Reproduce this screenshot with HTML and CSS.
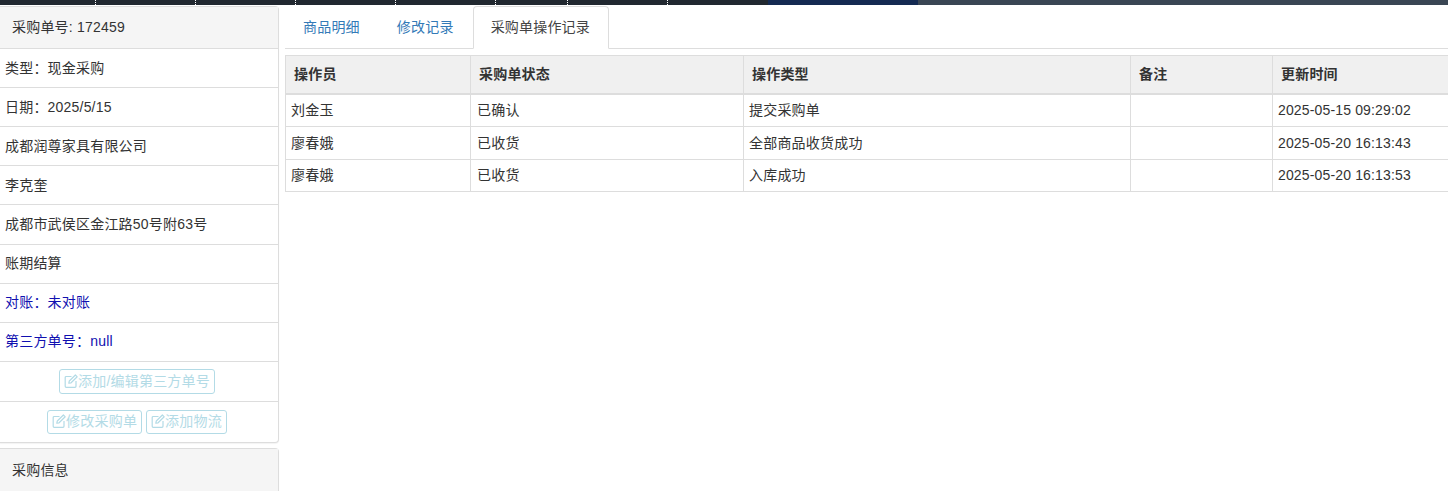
FILE: index.html
```html
<!DOCTYPE html>
<html lang="zh-CN">
<head>
<meta charset="utf-8">
<title>采购单操作记录</title>
<link rel="stylesheet" href="styles.css">
</head>
<body>
<svg width="0" height="0" class="defs">
  <symbol id="edit" viewBox="0 0 14 14">
    <path d="M7.5 2.5H2.2a1 1 0 0 0-1 1v8.8a1 1 0 0 0 1 1H11a1 1 0 0 0 1-1V7" fill="none" stroke="currentColor" stroke-width="1.2"/>
    <path d="M4.8 9.2 5.3 7 11.4 1 13.2 2.8 7.1 8.8Z" fill="none" stroke="currentColor" stroke-width="1.2" stroke-linejoin="round"/>
  </symbol>
</svg>
<div class="topbar">
  <i class="seg w95"></i><i class="seg w100"></i><i class="seg w100"></i><i class="seg w100"></i><i class="seg w100"></i><i class="seg w73"></i><i class="seg w100"></i><i class="seg w100 last"></i>
  <i class="navy"></i><i class="slate"></i>
</div>
<div class="page">
  <aside class="side">
    <section class="panel">
      <h3 class="panel-head">采购单号: 172459</h3>
      <div class="row">类型：现金采购</div>
      <div class="row">日期：2025/5/15</div>
      <div class="row">成都润尊家具有限公司</div>
      <div class="row">李克奎</div>
      <div class="row tall">成都市武侯区金江路50号附63号</div>
      <div class="row tight">账期结算</div>
      <div class="row tight blue">对账：未对账</div>
      <div class="row tight blue">第三方单号：null</div>
      <div class="row actions one">
        <a class="btn"><svg class="ico"><use href="#edit"/></svg>添加/编辑第三方单号</a>
      </div>
      <div class="row actions two">
        <a class="btn"><svg class="ico"><use href="#edit"/></svg>修改采购单</a>
        <a class="btn"><svg class="ico"><use href="#edit"/></svg>添加物流</a>
      </div>
    </section>
    <section class="panel second">
      <h3 class="panel-head">采购信息</h3>
    </section>
  </aside>
  <main class="main">
    <nav class="tabs">
      <a class="tab first">商品明细</a>
      <a class="tab second-tab">修改记录</a>
      <a class="tab active">采购单操作记录</a>
    </nav>
    <table class="grid">
      <colgroup>
        <col class="c1"><col class="c2"><col class="c3"><col class="c4"><col class="c5">
      </colgroup>
      <thead>
        <tr><th>操作员</th><th>采购单状态</th><th>操作类型</th><th>备注</th><th>更新时间</th></tr>
      </thead>
      <tbody>
        <tr class="r1"><td>刘金玉</td><td>已确认</td><td>提交采购单</td><td></td><td class="time">2025-05-15 09:29:02</td></tr>
        <tr class="r2"><td>廖春娥</td><td>已收货</td><td>全部商品收货成功</td><td></td><td class="time">2025-05-20 16:13:43</td></tr>
        <tr class="r3"><td>廖春娥</td><td>已收货</td><td>入库成功</td><td></td><td class="time">2025-05-20 16:13:53</td></tr>
      </tbody>
    </table>
  </main>
</div>
</body>
</html>
```
FILE: styles.css
```css
* { box-sizing: border-box; }
html, body { margin: 0; padding: 0; height: 100%; overflow: hidden; background: #fff; }
body {
  font-family: "Liberation Sans", "Noto Sans CJK SC", sans-serif;
  font-size: 14px;
  line-height: 18px;
  letter-spacing: .2px;
  color: #333;
}
.defs { position: absolute; }

.topbar { display: flex; height: 5px; background: #212830; }
.seg { display: block; height: 5px; border-right: 1px dotted #fff; }
.seg.last { border-right: 0; }
.w95 { width: 96px; }
.w100 { width: 100px; }
.w73 { width: 72px; }
.navy { display: block; width: 150px; height: 5px; background: #142a52; }
.slate { display: block; flex: 1; height: 5px; background: #3a4654; }

.page { display: flex; align-items: flex-start; height: 486px; }

.side { width: 279px; flex: none; padding-top: 1px; }
.panel {
  border: 1px solid #ddd;
  border-left: 0;
  border-radius: 0 4px 4px 0;
  background: #fff;
  box-shadow: 0 1px 1px rgba(0, 0, 0, .05);
}
.panel.second { margin-top: 5px; height: 60px; background: #f5f5f5; }
.panel-head {
  margin: 0;
  height: 42px;
  padding: 10px 12px;
  font-size: 14px;
  font-weight: 400;
  line-height: 20px;
  background: #f5f5f5;
  color: #333;
  border-bottom: 1px solid #ddd;
}
.panel.second .panel-head { padding-top: 11px; border-bottom: 0; }
.row {
  height: 39px;
  padding: 10px 5px;
  line-height: 18px;
  border-bottom: 1px solid #ddd;
}
.row.tall { height: 40px; }
.row.tight { padding-top: 9px; }
.row.blue { color: #1010b0; }
.actions { display: flex; justify-content: center; gap: 4px; padding: 7px 4px 0 0; }
.actions.one { height: 40px; }
.actions.two { height: 40px; padding-top: 8px; border-bottom: 0; }
.btn {
  display: flex;
  align-items: center;
  height: 25px;
  padding: 0 4px 2px;
  font-size: 14px;
  color: #b3dbe6;
  border: 1px solid #b3dbe6;
  border-radius: 3px;
  background: #fff;
}
.two .btn { height: 24px; }
.ico { width: 14px; height: 14px; flex: none; }

.main { flex: 1; min-width: 0; padding: 1px 0 0 6px; overflow: hidden; }
.tabs { display: flex; height: 43px; border-bottom: 1px solid #ddd; }
.tab {
  display: block;
  height: 43px;
  padding: 10px 17px;
  line-height: 20px;
  color: #337ab7;
  border: 1px solid transparent;
  border-radius: 4px 4px 0 0;
}
.tab.first { margin-right: 1px; }
.tab.second-tab { margin-right: 1px; }
.tab.active {
  padding-right: 18px;
  color: #444;
  background: #fff;
  border-color: #ddd #ddd #fff;
}
.grid {
  margin-top: 6px;
  width: 1200px;
  table-layout: fixed;
  border-collapse: collapse;
  border-left: 1px solid #ddd;
}
.c1 { width: 185px; }
.c2 { width: 273px; }
.c3 { width: 387px; }
.c4 { width: 142px; }
.c5 { width: 213px; }
.grid th, .grid td { border: 1px solid #ddd; text-align: left; }
.grid th {
  height: 38px;
  padding: 0 8px;
  font-weight: 700;
  background: #f0f0f0;
  border-bottom-width: 2px;
}
.grid td { padding: 0 5px; }
.grid td:nth-child(2) { padding-left: 6px; }
.grid td.time { letter-spacing: .15px; }
.grid .r1 td { height: 33px; }
.grid .r2 td { height: 33px; }
.grid .r3 td { height: 32px; padding-bottom: 2px; }
```
